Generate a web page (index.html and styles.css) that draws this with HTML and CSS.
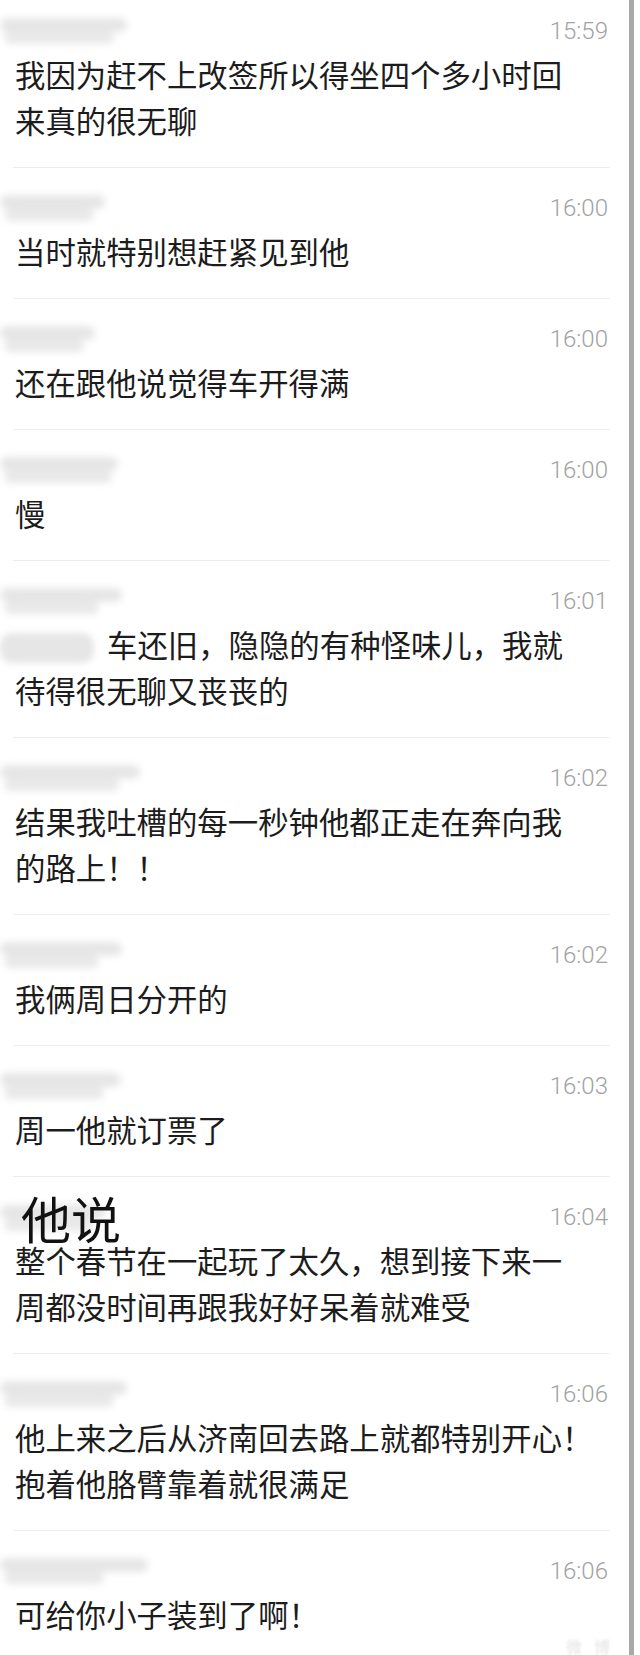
FILE: index.html
```html
<!DOCTYPE html>
<html lang="zh">
<head>
<meta charset="utf-8">
<title>聊天记录</title>
<link rel="stylesheet" href="styles.css">
</head>
<body>
<div class="page">
  <div class="list">
    <div class="row first">
      <div class="head"><div class="smudge s-w127"><i></i><i></i></div><span class="time">15:59</span></div>
      <div class="msg">我因为赶不上改签所以得坐四个多小时回<br>来真的很无聊</div>
    </div>
    <div class="row">
      <div class="head"><div class="smudge s-w105"><i></i><i></i></div><span class="time">16:00</span></div>
      <div class="msg">当时就特别想赶紧见到他</div>
    </div>
    <div class="row">
      <div class="head"><div class="smudge s-w95"><i></i><i></i></div><span class="time">16:00</span></div>
      <div class="msg">还在跟他说觉得车开得满</div>
    </div>
    <div class="row">
      <div class="head"><div class="smudge s-w118"><i></i><i></i></div><span class="time">16:00</span></div>
      <div class="msg">慢</div>
    </div>
    <div class="row">
      <div class="head"><div class="smudge s-w122"><i></i><i></i></div><span class="time">16:01</span></div>
      <div class="msg"><span class="inline-smudge"></span>车还旧，隐隐的有种怪味儿，我就<br>待得很无聊又丧丧的</div>
    </div>
    <div class="row">
      <div class="head"><div class="smudge s-w140"><i></i><i></i></div><span class="time">16:02</span></div>
      <div class="msg">结果我吐槽的每一秒钟他都正走在奔向我<br>的路上！！</div>
    </div>
    <div class="row">
      <div class="head"><div class="smudge s-w122"><i></i><i></i></div><span class="time">16:02</span></div>
      <div class="msg">我俩周日分开的</div>
    </div>
    <div class="row">
      <div class="head"><div class="smudge s-w121"><i></i><i></i></div><span class="time">16:03</span></div>
      <div class="msg">周一他就订票了</div>
    </div>
    <div class="row">
      <div class="head"><div class="smudge s-w105 behind"><i></i><i></i></div><span class="big">他说</span><span class="time">16:04</span></div>
      <div class="msg">整个春节在一起玩了太久，想到接下来一<br>周都没时间再跟我好好呆着就难受</div>
    </div>
    <div class="row">
      <div class="head"><div class="smudge s-w127"><i></i><i></i></div><span class="time">16:06</span></div>
      <div class="msg">他上来之后从济南回去路上就都特别开心！<br>抱着他胳臂靠着就很满足</div>
    </div>
    <div class="row">
      <div class="head"><div class="smudge s-w148"><i></i><i></i></div><span class="time">16:06</span></div>
      <div class="msg">可给你小子装到了啊！</div>
    </div>
  </div>
  <div class="scrollbar"></div>
  <div class="watermark">微博</div>
</div>
</body>
</html>
```
FILE: styles.css
```css
html, body {
  margin: 0;
  padding: 0;
  background: #ffffff;
}
body {
  width: 640px;
  height: 1655px;
  overflow: hidden;
}
.page {
  position: relative;
  display: flex;
  width: 640px;
  height: 1655px;
  overflow: hidden;
}
.list {
  flex: 0 0 629px;
  box-sizing: border-box;
  padding: 0 19px 0 13px;
}
.scrollbar {
  flex: 0 0 5px;
  background: #a9a9a9;
}
.row {
  display: flex;
  flex-direction: column;
  padding: 20px 2px 24px 2px;
  border-bottom: 1px solid #ededed;
}
.row.first {
  margin-top: -9px;
}
.head {
  position: relative;
  display: flex;
  align-items: center;
  justify-content: space-between;
  height: 40px;
}
.time {
  margin-left: auto;
  font-family: Roboto, "Liberation Sans", sans-serif;
  font-weight: 300;
  font-size: 24px;
  line-height: 40px;
  color: #a2a2a2;
}
.msg {
  font-family: "Noto Sans CJK SC", "Noto Sans", sans-serif;
  font-size: 30.4px;
  line-height: 46px;
  color: #1c1c1c;
  white-space: nowrap;
}
.smudge {
  display: flex;
  flex-direction: column;
  gap: 0;
  margin-left: -15px;
  filter: blur(3.5px);
}
.smudge i {
  display: block;
  height: 14px;
  background: #e6e6e6;
  border-radius: 8px;
}
.smudge i + i {
  margin-left: 4px;
  height: 12px;
  background: #e9e9e9;
}
.s-w95 i { width: 95px; }
.s-w95 i + i { width: 80px; }
.s-w105 i { width: 105px; }
.s-w105 i + i { width: 90px; }
.s-w118 i { width: 118px; }
.s-w118 i + i { width: 108px; }
.s-w121 i { width: 121px; }
.s-w121 i + i { width: 100px; }
.s-w122 i { width: 122px; }
.s-w122 i + i { width: 95px; }
.s-w127 i { width: 127px; }
.s-w127 i + i { width: 110px; }
.s-w140 i { width: 140px; }
.s-w140 i + i { width: 115px; }
.s-w148 i { width: 148px; }
.s-w148 i + i { width: 100px; }
.inline-smudge {
  display: inline-block;
  width: 94px;
  height: 30px;
  margin-left: -15px;
  margin-right: 13px;
  vertical-align: -6px;
  background: #e6e6e6;
  border-radius: 12px;
  filter: blur(3px);
}
.behind {
  position: absolute;
  left: 0;
  top: 8px;
}
.big {
  position: relative;
  margin-left: 6px;
  font-family: "Noto Sans CJK SC", "Noto Sans", sans-serif;
  font-size: 50px;
  font-weight: 400;
  line-height: 40px;
  color: #111111;
}
.watermark {
  position: absolute;
  right: 18px;
  bottom: 0;
  font-family: "Noto Sans CJK SC", sans-serif;
  font-size: 16px;
  line-height: 18px;
  letter-spacing: 12px;
  color: #e4e4e4;
  filter: blur(1px);
}
```
